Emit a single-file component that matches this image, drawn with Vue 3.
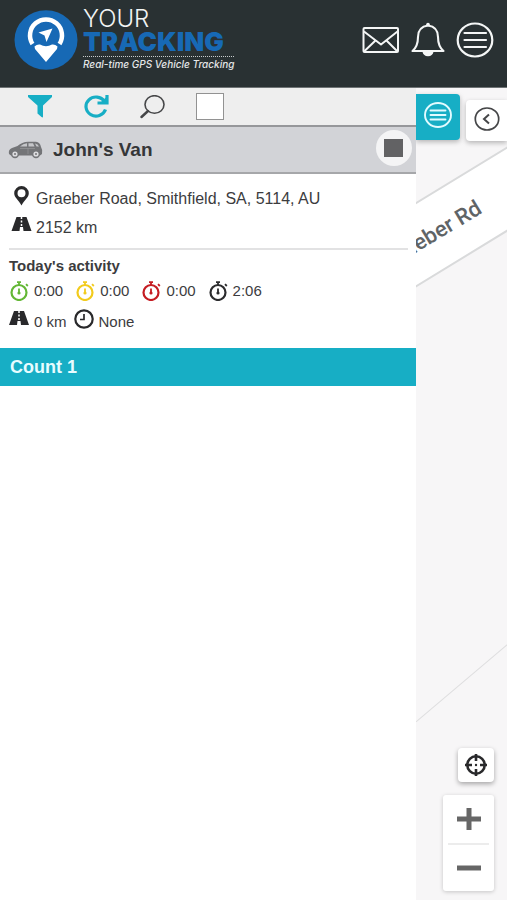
<script setup>
import { ref } from 'vue'

const selectAll = ref(false)
const timers = [
  { label: 'Moving', time: '0:00', tone: 'green' },
  { label: 'Idle', time: '0:00', tone: 'yellow' },
  { label: 'Stopped', time: '0:00', tone: 'red' },
  { label: 'Off', time: '2:06', tone: 'dark' },
]
</script>

<template>
  <div class="page">
    <header class="topbar">
      <a class="brand" href="#">
        <svg class="brand-mark" viewBox="0 0 64 60" aria-hidden="true">
          <ellipse cx="32" cy="30" rx="31.5" ry="29.8" fill="#1769b5" />
          <path d="M18.500 34A16 16 0 1 1 45.500 34" fill="none" stroke="#fff" stroke-width="4.500" />
          <path d="M20.500 36.500Q23 34 26 34.500Q32 38 38 34.500Q41 34 43.500 36.500L43 39L32 52L21 39Z" fill="#fff" />
          <path d="M38.500 18.500L24.500 22.500L30.500 25.500L32.500 32Z" fill="#fff" />
        </svg>
        <span class="brand-text">
          <span class="brand-your">YOUR</span>
          <span class="brand-tracking">TRACKING</span>
          <span class="brand-tag">Real-time GPS Vehicle Tracking</span>
        </span>
      </a>
      <nav class="top-actions">
        <button class="plain" aria-label="Messages">
          <svg width="38" height="36" viewBox="0 0 38 36" fill="none" stroke="#f4f6f6" stroke-width="2" stroke-linejoin="round">
            <rect x="1.500" y="6" width="34.500" height="24" rx="1" />
            <path d="M2 9.500L19 22.500L35.500 9.500M2 29.500L13.500 18.500M35.500 29.500L24.500 18.500" />
          </svg>
        </button>
        <button class="plain" aria-label="Notifications">
          <svg width="34" height="36" viewBox="0 0 34 36" fill="none" stroke="#f4f6f6" stroke-width="2.100" stroke-linejoin="round">
            <path d="M17 3.500C9.500 4.500 7 9 7 15C7 22 5 26 1.500 29H32.500C29 26 27 22 27 15C27 9 24.500 4.500 17 3.500Z" />
            <circle cx="17" cy="2.500" r="1.800" fill="#f4f6f6" stroke="none" />
            <path d="M12.500 29.500A4.600 4.600 0 0 0 21.500 29.500Z" fill="#f4f6f6" />
          </svg>
        </button>
        <button class="plain" aria-label="Menu">
          <svg width="38" height="36" viewBox="0 0 38 36" fill="none" stroke="#f4f6f6" stroke-width="2.200">
            <ellipse cx="19" cy="18" rx="17.300" ry="16.500" />
            <path d="M8.500 11H30M8.500 18H30M8.500 25H30" stroke-linecap="round" />
          </svg>
        </button>
      </nav>
    </header>

    <main class="content">
      <section class="sidebar">
        <div class="toolbar">
          <button class="plain" aria-label="Filter">
            <svg width="24" height="24" viewBox="0 0 24 24"><path d="M0 0H24V2L15 10.500V21.500Q15 23 13.500 22L9.500 18.500V10.500L0 2Z" fill="#17aec5" /></svg>
          </button>
          <button class="plain" aria-label="Refresh">
            <svg width="26" height="24" viewBox="0 0 26 24" fill="none" stroke="#17aec5" stroke-width="3.200">
              <path d="M21.500 6.500A10 9.500 0 1 0 22.500 14.500" />
              <path d="M24 0V8H14.500" />
              <path d="M17 8L24 1.500V8Z" fill="#17aec5" stroke="none" />
            </svg>
          </button>
          <button class="plain" aria-label="Search">
            <svg width="25" height="24" viewBox="0 0 25 24" fill="none" stroke="#454648">
              <ellipse cx="14.500" cy="9.500" rx="9.500" ry="8.800" stroke-width="1.600" />
              <path d="M8 16L1.500 22" stroke-width="2.400" stroke-linecap="round" />
            </svg>
          </button>
          <input v-model="selectAll" class="check" type="checkbox" aria-label="Select all vehicles" />
        </div>

        <div class="vehicle">
          <svg width="35" height="18" viewBox="0 0 35 18" aria-hidden="true">
            <path d="M1 13Q0 8.500 4 7L9.500 5Q14 1 20 .8H28Q32 1 33 6Q35 9 34 13L32 14.500H3Z" fill="#747578" />
            <path d="M12 5.500Q15 2.500 19 2.300V5.500ZM20.500 2.300H25L26.500 5.500H20.500ZM27 2.500Q30 2.800 31 5.500H28.500Z" fill="#c5c6c9" />
            <path d="M12 7.500H27M20 7V13" stroke="#929396" stroke-width=".8" />
            <g fill="#dddde0" stroke="#747578" stroke-width="1.600"><circle cx="7" cy="13" r="3.400" /><circle cx="28" cy="13" r="3.400" /></g>
            <g fill="#747578"><circle cx="7" cy="13" r="1" /><circle cx="28" cy="13" r="1" /></g>
          </svg>
          <h1>John's Van</h1>
          <button class="stop" aria-label="Vehicle stopped"><span></span></button>
        </div>

        <div class="details">
          <p class="line">
            <svg class="line-icon" width="24" height="20" viewBox="0 0 24 20" aria-hidden="true">
              <path fill-rule="evenodd" d="M12.500 0A7.300 7.300 0 0 0 5.200 7.300C5.200 11.500 9.500 14 12.500 19.500C15.500 14 19.800 11.500 19.800 7.300A7.300 7.300 0 0 0 12.500 0ZM12.500 3.300A4 4 0 1 1 12.500 11.300A4 4 0 1 1 12.500 3.300Z" fill="#29292b" />
            </svg>
            <span>Graeber Road, Smithfield, SA, 5114, AU</span>
          </p>
          <p class="line">
            <svg class="line-icon" width="24" height="20" viewBox="0 0 24 20" aria-hidden="true">
              <path d="M7.500 2H17.500L22.500 16H14.500L14 12H11L10.500 16H2.500Z" fill="#29292b" />
              <path d="M12.500 2V4M12.500 5.500V7.500M12.500 9V11" stroke="#fff" stroke-width="1.500" />
            </svg>
            <span>2152 km</span>
          </p>
          <hr />
          <h2>Today's activity</h2>
          <ul class="timers">
            <li v-for="timer in timers" :key="timer.label" :class="timer.tone">
              <svg width="20" height="20" viewBox="0 0 20 20" fill="none" stroke="currentColor" role="img" :aria-label="timer.label">
                <circle cx="10" cy="11.500" r="7.500" stroke-width="2.200" />
                <path d="M8 1.200H12M10 1V4" stroke-width="1.800" />
                <path d="M17 3.200L18.800 5" stroke-width="1.800" />
                <path d="M10 7.500V12" stroke-width="1.800" /><circle cx="10" cy="12" r="1.600" fill="currentColor" stroke="none" />
              </svg>
              <span>{{ timer.time }}</span>
            </li>
          </ul>
          <p class="summary">
            <span class="fact">
              <svg class="line-icon" width="20" height="20" viewBox="0 0 20 20" aria-hidden="true">
                <path d="M5 2H15L20 16H12L11.500 12H8.500L8 16H0Z" fill="#29292b" />
                <path d="M10 2V4M10 5.500V7.500M10 9V11" stroke="#fff" stroke-width="1.500" />
              </svg>
              <span>0 km</span>
            </span>
            <span class="fact">
              <svg class="line-icon" width="20" height="20" viewBox="0 0 20 20" fill="none" stroke="#29292b" aria-hidden="true">
                <circle cx="10" cy="10" r="8.700" stroke-width="2.200" />
                <path d="M10 5V10.500H6" stroke-width="1.700" />
              </svg>
              <span>None</span>
            </span>
          </p>
        </div>
        <p class="count">Count 1</p>
      </section>

      <section class="map" aria-label="Map">
        <svg class="map-art" viewBox="0 0 91 812" preserveAspectRatio="xMinYMin slice">
          <path d="M-2 116L93 58V141L-2 199Z" fill="#fff" stroke="#d9dadb" stroke-width="2" />
          <path d="M0 632L91 555" stroke="#dededf" stroke-width="1" />
          <text class="street" x="67" y="124" transform="rotate(-31 67 124)" text-anchor="end">Graeber Rd</text>
        </svg>
        <div class="tabs">
          <button class="tab list-tab" aria-label="Vehicle list">
            <svg width="28" height="28" viewBox="0 0 28 28" fill="none" stroke="#e2fbff" stroke-width="1.900">
              <ellipse cx="14" cy="14" rx="13" ry="12" /><path d="M6.500 9.500H21.500M6.500 14H21.500M6.500 18.500H21.500" stroke-linecap="round" />
            </svg>
          </button>
          <button class="tab back-tab" aria-label="Collapse panel">
            <svg width="26" height="26" viewBox="0 0 26 26" fill="none" stroke="#454648" stroke-width="1.700">
              <ellipse cx="13" cy="13" rx="11.700" ry="11" /><path d="M15 8.500L10 13L15 17.500" stroke-width="2" />
            </svg>
          </button>
        </div>
        <div class="controls">
          <button class="locate" aria-label="My location">
            <svg width="24" height="24" viewBox="0 0 24 24" fill="none" stroke="#29292b">
              <circle cx="12" cy="12" r="8.700" stroke-width="2.600" />
              <path d="M12 1V8M12 16V23M1 12H8M16 12H23" stroke-width="2.600" />
              <circle cx="12" cy="12" r="1.200" fill="#29292b" stroke="none" />
            </svg>
          </button>
          <div class="zoom">
            <button aria-label="Zoom in"><svg width="24" height="24" viewBox="0 0 24 24"><path d="M0 12H24M12 1V23" stroke="#666" stroke-width="5" /></svg></button>
            <button aria-label="Zoom out"><svg width="24" height="24" viewBox="0 0 24 24"><path d="M0 12H24" stroke="#666" stroke-width="5" /></svg></button>
          </div>
        </div>
      </section>
    </main>
  </div>
</template>

<style>
body {
  margin: 0;
}
</style>

<style scoped>
* {
  box-sizing: border-box;
}
.page {
  display: flex;
  flex-direction: column;
  min-height: 100vh;
  background: #fff;
  color: #3c3c3e;
  font: 15px/20px "Liberation Sans", Arial, sans-serif;
}
h1, h2, p, ul {
  margin: 0;
  padding: 0;
}
svg {
  display: block;
  flex: none;
}
button {
  display: flex;
  align-items: center;
  justify-content: center;
  padding: 0;
  border: 0;
  background: #fff;
  cursor: pointer;
}
.plain {
  background: none;
}
.topbar {
  display: flex;
  align-items: center;
  justify-content: space-between;
  height: 88px;
  padding: 0 13px 8px 14px;
  background: #293133;
  border-bottom: 1px solid #6e7375;
}
.brand {
  display: flex;
  align-items: center;
  gap: 5px;
  text-decoration: none;
}
.brand-mark {
  width: 64px;
  height: 60px;
}
.brand-text {
  display: flex;
  flex-direction: column;
  font-family: Inter, sans-serif;
  white-space: nowrap;
}
.brand-your {
  color: #f2f4f4;
  font-size: 24px;
  font-weight: 300;
  line-height: 22px;
}
.brand-tracking {
  color: #1769b5;
  font-size: 26px;
  font-weight: 900;
  line-height: 24px;
  padding-bottom: 2px;
  border-bottom: 1px dotted #c8cccd;
}
.brand-tag {
  color: #e4e6e7;
  font-size: 10px;
  font-style: italic;
  font-weight: 500;
  line-height: 14px;
}
.top-actions {
  display: flex;
  gap: 11px;
}
.content {
  display: flex;
  flex: 1;
}
.sidebar {
  flex: 0 0 82%;
  background: #fff;
}
.toolbar {
  display: flex;
  align-items: center;
  gap: 31px;
  height: 39px;
  padding: 0 28px;
  background: #eee;
  border-bottom: 2px solid #96979a;
}
.check {
  appearance: none;
  width: 28px;
  height: 27px;
  margin: 0;
  background: #fff;
  border: 1px solid #929292;
}
.check:checked {
  background: #17aec5;
}
.vehicle {
  display: flex;
  align-items: center;
  gap: 10px;
  height: 47px;
  padding: 0 4px 0 8px;
  background: #d2d3d7;
  border-bottom: 2px solid #a6a7aa;
}
h1 {
  flex: 1;
  color: #353638;
  font-size: 19px;
  line-height: 24px;
}
.stop {
  width: 36px;
  height: 36px;
  margin-bottom: 4px;
  background: #f4f4f5;
  border-radius: 50%;
}
.stop span {
  width: 19px;
  height: 18px;
  background: #626264;
}
.details {
  padding: 10px 8px 10px 9px;
}
.line {
  display: flex;
  align-items: center;
  gap: 3px;
  height: 29px;
  font-size: 16px;
}
.line-icon {
  margin-bottom: 6px;
}
hr {
  height: 2px;
  margin: 6px 0;
  border: 0;
  background: #e2e2e3;
}
h2 {
  font-size: 15px;
  line-height: 20px;
}
.timers {
  display: flex;
  gap: 12px;
  height: 30px;
  align-items: center;
  list-style: none;
}
.timers li {
  display: flex;
  align-items: center;
  gap: 5px;
}
.timers span {
  color: #3c3c3e;
}
.green {
  color: #63b735;
}
.yellow {
  color: #f2cb1d;
}
.red {
  color: #c51c22;
}
.dark {
  color: #2c2c2e;
}
.summary {
  display: flex;
  gap: 7px;
}
.fact {
  display: flex;
  align-items: center;
  gap: 5px;
  height: 32px;
}
.count {
  padding: 9px 10px;
  color: #e8fcff;
  background: #17aec5;
  font-size: 18px;
  font-weight: bold;
  line-height: 20px;
}
.map {
  position: relative;
  display: flex;
  flex: 1;
  flex-direction: column;
  justify-content: space-between;
  min-width: 0;
  overflow: hidden;
  background: #f7f6f7;
}
.map-art {
  position: absolute;
  inset: 0;
  width: 100%;
  height: 100%;
}
.street {
  fill: #5f6466;
  font: 500 22px Roboto, sans-serif;
}
.tabs, .controls {
  position: relative;
  display: flex;
}
.tabs {
  align-items: flex-start;
  justify-content: space-between;
  padding-top: 6px;
}
.tab {
  box-shadow: 0 2px 5px #0004;
}
.list-tab {
  width: 44px;
  height: 46px;
  padding-bottom: 4px;
  background: #17aec5;
  border-radius: 0 4px 4px 0;
}
.back-tab {
  width: 41px;
  height: 41px;
  margin-top: 6px;
  padding-bottom: 4px;
  border-radius: 4px 0 0 4px;
}
.controls {
  flex-direction: column;
  align-items: flex-end;
  gap: 13px;
  padding: 0 13px 9px;
}
.locate {
  width: 36px;
  height: 34px;
  border-radius: 4px;
  box-shadow: 0 2px 5px #0005;
}
.zoom {
  width: 51px;
  padding: 0 5px;
  background: #fff;
  border-radius: 3px;
  box-shadow: 0 1px 4px #0003;
}
.zoom button {
  width: 100%;
  height: 48px;
}
.zoom button + button {
  border-top: 2px solid #ececec;
}
</style>
